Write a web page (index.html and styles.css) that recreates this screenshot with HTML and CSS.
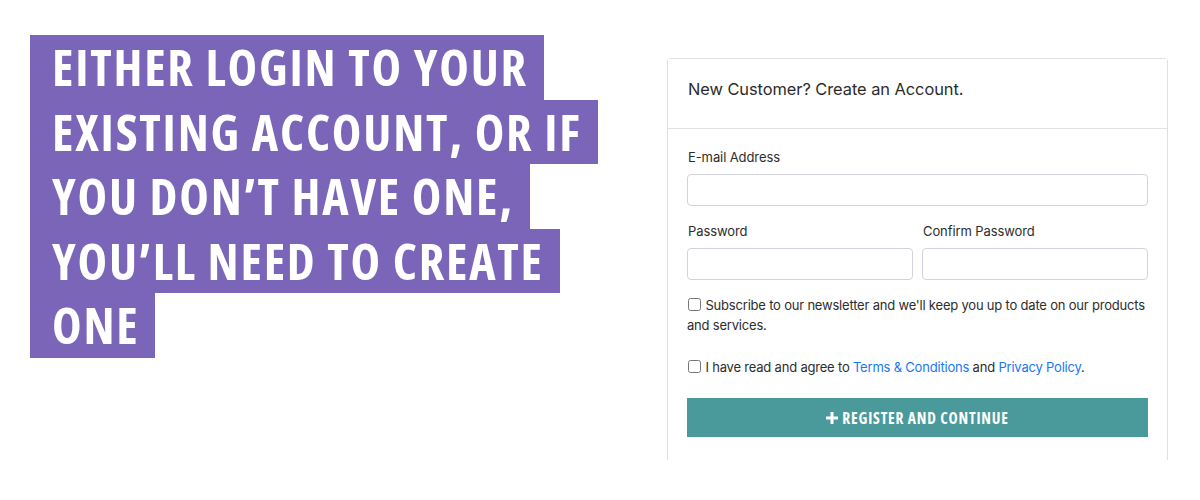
FILE: index.html
```html
<!DOCTYPE html>
<html lang="en">
<head>
<meta charset="utf-8">
<title>Create an Account</title>
<link rel="stylesheet" href="styles.css">
</head>
<body>
<main class="page">
  <h1 class="headline">
    <span class="hl-line">EITHER LOGIN TO YOUR</span>
    <span class="hl-line">EXISTING ACCOUNT, OR IF</span>
    <span class="hl-line">YOU DON’T HAVE ONE,</span>
    <span class="hl-line">YOU’LL NEED TO CREATE</span>
    <span class="hl-line">ONE</span>
  </h1>

  <section class="card">
    <header class="card-header">New Customer? Create an Account.</header>
    <form class="card-body">
      <label class="field">
        <span class="label">E-mail Address</span>
        <input class="input" type="email">
      </label>
      <div class="row">
        <label class="field">
          <span class="label">Password</span>
          <input class="input" type="password">
        </label>
        <label class="field">
          <span class="label">Confirm Password</span>
          <input class="input" type="password">
        </label>
      </div>
      <label class="check">
        <input type="checkbox" class="box"> Subscribe to our newsletter and we'll keep you up to date on our products and services.
      </label>
      <label class="check check-terms">
        <input type="checkbox" class="box"> I have read and agree to <a href="#" class="link">Terms &amp; Conditions</a> and <a href="#" class="link">Privacy Policy</a>.
      </label>
      <button type="button" class="btn">
        <svg class="plus" viewBox="0 0 12 12" width="12" height="12"><path d="M6 0v12M0 6h12" stroke="#fff" stroke-width="3"/></svg>
        <span>REGISTER AND CONTINUE</span>
      </button>
    </form>
  </section>
</main>
</body>
</html>
```

FILE: styles.css
```css
* { box-sizing: border-box; }
html, body { margin: 0; padding: 0; background: #fff; }
body { font-family: Inter, "Noto Sans", sans-serif; color: #333; }

.page {
  display: grid;
  grid-template-columns: minmax(0, 1fr) 501px;
  align-items: start;
  padding: 35px 32px 0 30px;
  height: 500px;
}

.headline {
  margin: 0;
  display: flex;
  flex-direction: column;
  align-items: flex-start;
  font-family: "Open Sans", sans-serif;
  font-stretch: 75%;
  font-weight: 700;
  font-size: 50px;
  letter-spacing: 1.8px;
  color: #fff;
}
.hl-line {
  display: block;
  background: #7b65b9;
  padding: 0 16px 0 22px;
  line-height: 64.6px;
  height: 64.6px;
  white-space: nowrap;
}

.card {
  margin-top: 23px;
  height: 402px;
  border: 1px solid #dfdfdf;
  border-bottom: none;
  border-radius: 4px 4px 0 0;
  background: #fff;
}
.card-header {
  height: 70px;
  padding: 20px 19px 0 20px;
  font-size: 16.4px;
  letter-spacing: -0.05px;
  line-height: 20px;
  color: #2b2b2b;
  border-bottom: 1px solid #e2e2e2;
  background: #fff;
}
.card-body {
  padding: 19px 19px 0 19px;
  display: flex;
  flex-direction: column;
}
.field {
  display: flex;
  flex-direction: column;
  flex: 1;
  min-width: 0;
}
.label {
  font-size: 13px;
  line-height: 18px;
  letter-spacing: -0.1px;
  color: #2d2d2d;
  margin-bottom: 8px;
  padding-left: 1px;
}
.input {
  width: 100%;
  min-width: 0;
  height: 32px;
  border: 1px solid #d3d3dc;
  border-radius: 4px;
  background: #fff;
  font: inherit;
}
.row {
  display: flex;
  gap: 9px;
  margin-top: 16px;
}
.check {
  display: block;
  margin-top: 15px;
  font-size: 13px;
  line-height: 20px;
  letter-spacing: -0.2px;
  color: #2d2d2d;
}
.check-terms { margin-top: 22px; }
.box {
  margin: 0 1px 0 1px;
  width: 13px;
  height: 13px;
  vertical-align: -1px;
}
.link { color: #1877f2; text-decoration: none; }

.btn {
  margin-top: 21px;
  height: 39px;
  border: none;
  background: #4a9a9b;
  color: #fff;
  display: flex;
  align-items: center;
  justify-content: center;
  gap: 4px;
  font-family: "Open Sans", sans-serif;
  font-stretch: 75%;
  font-weight: 700;
  font-size: 15.5px;
  letter-spacing: 0.8px;
  padding: 0;
}
.plus { display: block; }
```
